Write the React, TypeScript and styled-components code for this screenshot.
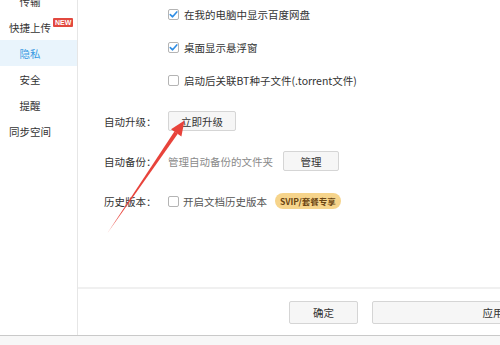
import styled, { createGlobalStyle } from "styled-components";

const GlobalStyle = createGlobalStyle`
  html, body {
    margin: 0;
    padding: 0;
    width: 500px;
    height: 345px;
    overflow: hidden;
    background: #fff;
  }
  body {
    font-family: "Noto Sans CJK SC", "Liberation Sans", sans-serif;
    font-size: 10.5px;
    color: #333;
  }
`;

const menu = [
  { label: "传输" },
  { label: "快捷上传", badge: true },
  { label: "隐私", active: true },
  { label: "安全" },
  { label: "提醒" },
  { label: "同步空间" },
];

const checks = [
  { label: "在我的电脑中显示百度网盘", checked: true },
  { label: "桌面显示悬浮窗", checked: true },
  { label: "启动后关联BT种子文件(.torrent文件)", checked: false },
];

const CheckBox = ({ checked }: { checked: boolean }) => (
  <Box>
    {checked && (
      <svg width="9" height="9" viewBox="0 0 9 9">
        <path
          d="M1.3 4.6 L3.6 6.8 L7.8 1.9"
          fill="none"
          stroke="#2f8de4"
          strokeWidth="1.6"
          strokeLinecap="round"
          strokeLinejoin="round"
        />
      </svg>
    )}
  </Box>
);

const App = () => {
  return (
    <Window>
      <GlobalStyle />
      <Frame>
        <Sidebar>
          {menu.map((item) => (
            <MenuItem key={item.label} $active={!!item.active}>
              <MenuText>
                {item.label}
                {item.badge && <NewBadge>NEW</NewBadge>}
              </MenuText>
            </MenuItem>
          ))}
        </Sidebar>
        <Main>
          <Content>
            <CheckList>
              {checks.map((c) => (
                <CheckRow key={c.label}>
                  <CheckBox checked={c.checked} />
                  <span>{c.label}</span>
                </CheckRow>
              ))}
            </CheckList>
            <Fields>
              <FieldRow>
                <Label>自动升级：</Label>
                <Button $width={68}>立即升级</Button>
              </FieldRow>
              <FieldRow>
                <Label>自动备份：</Label>
                <Hint>管理自动备份的文件夹</Hint>
                <Button $width={56}>管理</Button>
              </FieldRow>
              <FieldRow>
                <Label>历史版本：</Label>
                <CheckBox checked={false} />
                <OptionText>开启文档历史版本</OptionText>
                <VipBadge>SVIP/套餐专享</VipBadge>
              </FieldRow>
            </Fields>
          </Content>
          <Footer>
            <FooterButton $width={69}>确定</FooterButton>
            <FooterButton $width={242}>应用</FooterButton>
          </Footer>
        </Main>
      </Frame>
      <Arrow width="500" height="345" viewBox="0 0 500 345">
        <polygon points="107.5,233 177.8,133.8 174.4,131.4" fill="#e8433b" />
        <polygon points="184.5,120.5 181.4,136.4 171,129.3" fill="#e8433b" />
      </Arrow>
    </Window>
  );
};

export default App;

const Window = styled.div`
  position: relative;
  width: 500px;
  height: 345px;
  overflow: hidden;
  background: #f7f7f7;
`;

const Frame = styled.div`
  display: flex;
  height: 336px;
  border-bottom: 1px solid #c9c9c9;
  background: #fff;
  box-sizing: border-box;
`;

const Sidebar = styled.nav`
  width: 77px;
  flex-shrink: 0;
  border-right: 1px solid #e6e6e6;
  display: flex;
  flex-direction: column;
  margin-top: -12px;
`;

const MenuItem = styled.div<{ $active: boolean }>`
  height: 26px;
  display: flex;
  align-items: center;
  justify-content: center;
  padding-right: 17px;
  color: ${({ $active }) => ($active ? "#3a9be3" : "#333")};
  background: ${({ $active }) => ($active ? "#e9f4fc" : "transparent")};
`;

const MenuText = styled.span`
  position: relative;
  white-space: nowrap;
`;

const NewBadge = styled.span`
  position: absolute;
  left: 44px;
  top: -2px;
  padding: 0 2px;
  height: 9px;
  line-height: 9px;
  background: #e2483f;
  color: #fff;
  font-family: "Liberation Sans", sans-serif;
  font-size: 7px;
  font-weight: bold;
  border-radius: 1px;
`;

const Main = styled.main`
  flex: 1;
  display: flex;
  flex-direction: column;
  min-width: 0;
`;

const Content = styled.section`
  flex: 1;
`;

const CheckList = styled.div`
  margin-top: -2px;
  padding-left: 90px;
`;

const CheckRow = styled.label`
  height: 33px;
  display: flex;
  align-items: center;
  gap: 5px;
  white-space: nowrap;
`;

const Box = styled.span`
  width: 11px;
  height: 11px;
  box-sizing: border-box;
  border: 1px solid #b4b4b4;
  border-radius: 2px;
  background: #fff;
  display: inline-flex;
  align-items: center;
  justify-content: center;
  flex-shrink: 0;
`;

const Fields = styled.div`
  margin-top: 4px;
  padding-left: 26px;
`;

const FieldRow = styled.div`
  height: 40px;
  display: flex;
  align-items: center;
  white-space: nowrap;
`;

const Label = styled.span`
  width: 64px;
  flex-shrink: 0;
`;

const Button = styled.button<{ $width: number }>`
  width: ${({ $width }) => $width}px;
  height: 20px;
  padding: 0;
  background: #f6f6f6;
  border: 1px solid #d5d5d5;
  border-radius: 2px;
  font: inherit;
  color: #333;
`;

const Hint = styled.span`
  color: #8a8a8a;
  margin-right: 10px;
`;

const OptionText = styled.span`
  color: #555;
  margin-left: 4px;
  margin-right: 8px;
`;

const VipBadge = styled.span`
  height: 16px;
  line-height: 16px;
  padding: 0 5px;
  border-radius: 8px;
  background: #f6d48b;
  color: #6b4512;
  font-size: 8.5px;
  font-weight: bold;
`;

const Footer = styled.footer`
  height: 46px;
  border-top: 2px solid #f0f0f0;
  display: flex;
  align-items: center;
  gap: 14px;
  padding-left: 211px;
`;

const FooterButton = styled.button<{ $width: number }>`
  width: ${({ $width }) => $width}px;
  flex-shrink: 0;
  height: 23px;
  padding: 0;
  background: #f6f6f6;
  border: 1px solid #d5d5d5;
  border-radius: 2px;
  font: inherit;
  color: #333;
`;

const Arrow = styled.svg`
  position: absolute;
  left: 0;
  top: 0;
  pointer-events: none;
`;
